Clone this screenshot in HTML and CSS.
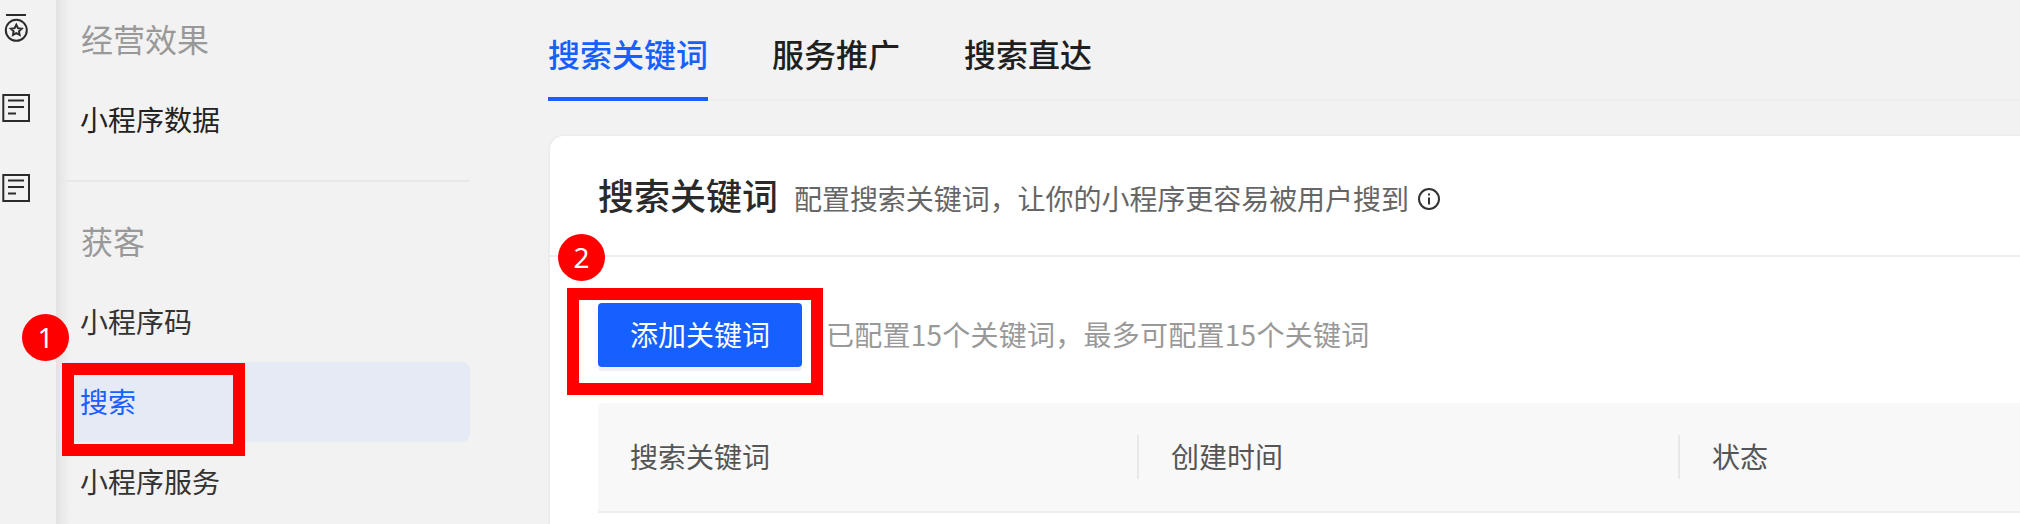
FILE: index.html
```html
<!DOCTYPE html>
<html lang="zh-CN">
<head>
    <meta charset="UTF-8">
    <meta name="viewport" content="width=device-width, initial-scale=1.0">
    <title>搜索关键词</title>
    <link rel="stylesheet" href="styles.css">
</head>
<body>
    <div class="rail">
        <svg class="rail-icon" viewBox="0 0 32 32">
            <path d="M6 3H26"/>
            <circle cx="16.3" cy="18.3" r="10.5"/>
            <path d="M16.3 12.800l1.700 3.400 3.700.5-2.700 2.600.6 3.700-3.300-1.800-3.300 1.800.6-3.700-2.700-2.600 3.700-.5z"/>
        </svg>
        <svg class="rail-icon" viewBox="0 0 32 32">
            <rect x="3.3" y="3" width="25.7" height="26"/>
            <path d="M8 8.500H24M8 15H24M8 21.500H16"/>
        </svg>
        <svg class="rail-icon" viewBox="0 0 32 32">
            <rect x="3.3" y="3" width="25.7" height="26"/>
            <path d="M8 8.500H24M8 15H24M8 21.500H16"/>
        </svg>
    </div>

    <div class="sidebar">
        <div class="nav-group">
            <div class="nav-title">经营效果</div>
            <div class="nav-item dark">小程序数据</div>
        </div>
        <div class="nav-group">
            <div class="nav-title">获客</div>
            <div class="nav-item">小程序码</div>
            <div class="nav-item active">搜索</div>
            <div class="nav-item">小程序服务</div>
        </div>
    </div>

    <div class="main">
        <div class="tabs">
            <div class="tab active">搜索关键词</div>
            <div class="tab">服务推广</div>
            <div class="tab">搜索直达</div>
        </div>

        <div class="card">
            <div class="card-head">
                <span class="card-title">搜索关键词</span>
                <span class="card-desc">配置搜索关键词，让你的小程序更容易被用户搜到</span>
                <svg class="info-icon" viewBox="0 0 24 24">
                    <circle cx="12" cy="12" r="10"/>
                    <path d="M12 10.500V17.500M12 6.500V8.500"/>
                </svg>
            </div>
            <div class="card-body">
                <div class="toolbar">
                    <button class="add-btn">添加关键词</button>
                    <span class="hint">已配置15个关键词，最多可配置15个关键词</span>
                </div>
                <div class="table-head">
                    <div class="col">搜索关键词</div>
                    <div class="col">创建时间</div>
                    <div class="col">状态</div>
                </div>
            </div>
        </div>
    </div>

    <!-- red annotations drawn over the screenshot -->
    <div class="mark-box box-one"></div>
    <div class="mark-dot dot-one">1</div>
    <div class="mark-box box-two"></div>
    <div class="mark-dot dot-two">2</div>
</body>
</html>
```

FILE: styles.css
```css
html, body {
    height: 100%;
}
body {
    position: relative;
    display: flex;
    margin: 0;
    overflow: hidden;
    background-color: #f2f2f2;
    color: #333;
    font-family: "Noto Sans CJK SC", "Noto Sans", sans-serif;
    font-size: 28px;
}

/* icon rail */
.rail {
    display: flex;
    flex-direction: column;
    gap: 48px;
    flex: none;
    width: 56px;
    padding-top: 12px;
    box-sizing: border-box;
}
.rail-icon {
    display: block;
    width: 32px;
    height: 32px;
    fill: none;
    stroke: #2b2b2b;
    stroke-width: 2;
}

/* sidebar */
.sidebar {
    flex: none;
    width: 444px;
    padding: 0 30px 0 4px;
    box-sizing: border-box;
    background: linear-gradient(to right, #e2e2e2, #f2f2f2 14px);
}
.nav-group {
    padding-bottom: 20px;
    margin-bottom: 20px;
    border-bottom: 2px solid #e8e8e8;
}
.nav-group:last-child {
    padding-bottom: 0;
    margin-bottom: 0;
    border-bottom: none;
}
.nav-title {
    height: 80px;
    padding-left: 21px;
    line-height: 77px;
    font-size: 32px;
    color: #999;
}
.nav-item {
    height: 80px;
    padding-left: 20px;
    line-height: 78px;
    border-radius: 8px;
}
.nav-item.dark {
    color: #222;
}
.nav-item.active {
    background-color: #e6eaf5;
    color: #1a5fff;
}

/* tabs */
.main {
    display: flex;
    flex-direction: column;
    flex: 1;
    min-width: 0;
    padding-left: 48px;
}
.tabs {
    display: flex;
    flex: none;
    gap: 64px;
    height: 99px;
    border-bottom: 2px solid #ededed;
}
.tab {
    height: 66px;
    padding-top: 31px;
    line-height: 44px;
    font-size: 32px;
    font-weight: 500;
    color: #1f1f1f;
}
.tab.active {
    color: #1660ff;
    border-bottom: 4px solid #1660ff;
}

/* card */
.card {
    flex: 1;
    min-height: 0;
    margin-top: 33px;
    border: 2px solid #ededed;
    border-width: 2px 0 0 2px;
    border-radius: 16px 0 0 0;
    background-color: #fff;
}
.card-head {
    display: flex;
    align-items: baseline;
    height: 121px;
    padding: 33px 0 0 48px;
    box-sizing: border-box;
    border-bottom: 2px solid #ededed;
}
.card-title {
    line-height: 50px;
    font-size: 36px;
    font-weight: 500;
    color: #2a2a2a;
}
.card-desc {
    margin-left: 16px;
    letter-spacing: -0.05px;
    color: #666;
}
.info-icon {
    width: 24px;
    height: 24px;
    margin: 18px 0 0 8px;
    align-self: flex-start;
    fill: none;
    stroke: #333;
    stroke-width: 2;
}
.card-body {
    padding: 46px 0 0 48px;
}
.toolbar {
    display: flex;
    align-items: center;
}
.add-btn {
    width: 204px;
    height: 64px;
    padding: 0 0 2px;
    border: none;
    border-radius: 4px;
    background-color: #1660ff;
    box-shadow: 0 4px 0 #f0f1f4;
    color: #fff;
    font-family: inherit;
    font-size: 28px;
}
.hint {
    margin: 0 0 2px 24px;
    letter-spacing: 0.25px;
    color: #999;
}

/* table header */
.table-head {
    display: flex;
    align-items: center;
    height: 108px;
    margin-top: 36px;
    border-bottom: 2px solid #eee;
    border-radius: 4px 0 0 0;
    background-color: #f8f8f8;
    color: #555;
}
.col {
    flex: none;
    width: 541px;
    height: 44px;
    padding-left: 32px;
    box-sizing: border-box;
    line-height: 43px;
    border-right: 2px solid #e8e8e8;
}
.col:last-child {
    flex: 1;
    min-width: 0;
    border-right: none;
}

/* annotations */
.mark-box {
    position: absolute;
    box-sizing: border-box;
    border: 12px solid #f00;
}
.box-one {
    left: 62px;
    top: 363px;
    width: 183px;
    height: 93px;
}
.box-two {
    left: 567px;
    top: 288px;
    width: 256px;
    height: 107px;
}
.mark-dot {
    position: absolute;
    width: 47px;
    height: 47px;
    border-radius: 50%;
    background-color: #f00;
    color: #fff;
    font-family: "Noto Sans", sans-serif;
    font-size: 28px;
    line-height: 47px;
    text-align: center;
}
.dot-one {
    left: 22px;
    top: 314px;
}
.dot-two {
    left: 558px;
    top: 234px;
}
```
